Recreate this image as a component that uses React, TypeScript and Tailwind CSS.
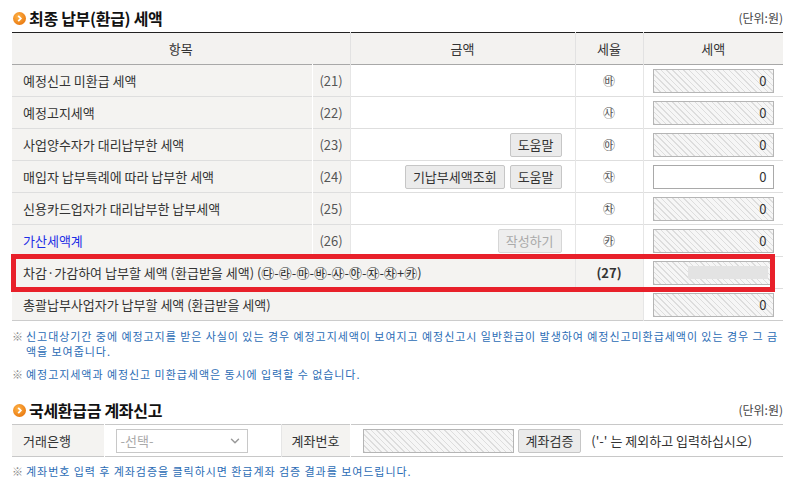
import React from "react";
import { ChevronDown } from "lucide-react";

const Bullet = () => (
  <svg width="13" height="13" viewBox="0 0 13 13" className="shrink-0">
    <defs>
      <radialGradient id="bg" cx="40%" cy="35%" r="70%">
        <stop offset="0%" stopColor="#ffb347" />
        <stop offset="100%" stopColor="#e8770e" />
      </radialGradient>
    </defs>
    <circle cx="6.5" cy="6.5" r="6.5" fill="url(#bg)" />
    <path d="M5.2 3.8 L7.8 6.5 L5.2 9.2" stroke="#fff" strokeWidth="1.8" fill="none" />
  </svg>
);

const Btn = ({ children, disabled }: { children: React.ReactNode; disabled?: boolean }) => (
  <button
    className={
      disabled
        ? "h-[24px] px-[7px] border border-[#d6d6d6] bg-[#eeeeee] rounded-[2px] text-[#aaaaaa] leading-none"
        : "h-[24px] px-[7px] border border-[#c6c6c6] bg-[#ebebeb] rounded-[2px] text-[#333333] leading-none"
    }
  >
    {children}
  </button>
);

const TaxBox = ({ editable, masked }: { editable?: boolean; masked?: boolean }) => (
  <div
    className={
      editable
        ? "h-[24px] w-[121px] border border-[#a9a9a9] bg-white flex items-center justify-end pr-[6px]"
        : "h-[24px] w-[121px] border border-[#b5b5b5] bg-[image:repeating-linear-gradient(45deg,#dddddd_0px,#dddddd_1px,#f6f6f6_1px,#f6f6f6_4px)] flex items-center justify-end pr-[6px]"
    }
  >
    {masked ? <div className="h-[13px] w-[80px] bg-[#e3e3e3] mr-[-1px]" /> : <span className="text-[#333]">0</span>}
  </div>
);

type Row = { label: string; no: string; rate: string; blue?: boolean; btns?: React.ReactNode; editable?: boolean };

const rows: Row[] = [
  { label: "예정신고 미환급 세액", no: "(21)", rate: "㉳" },
  { label: "예정고지세액", no: "(22)", rate: "㉴" },
  { label: "사업양수자가 대리납부한 세액", no: "(23)", rate: "㉵", btns: <Btn>도움말</Btn> },
  {
    label: "매입자 납부특례에 따라 납부한 세액",
    no: "(24)",
    rate: "㉶",
    editable: true,
    btns: (
      <>
        <Btn>기납부세액조회</Btn>
        <Btn>도움말</Btn>
      </>
    ),
  },
  { label: "신용카드업자가 대리납부한 납부세액", no: "(25)", rate: "㉷" },
  { label: "가산세액계", no: "(26)", rate: "㉸", blue: true, btns: <Btn disabled>작성하기</Btn> },
];

const Title = ({ text }: { text: string }) => (
  <div className="h-[32px] pt-[4px] flex items-center justify-between">
    <div className="flex items-center gap-[3px] pl-[1px]">
      <Bullet />
      <h2 className="text-[16px] font-bold text-[#111] tracking-[-0.3px]">{text}</h2>
    </div>
    <span className="text-[12px] text-[#444]">(단위:원)</span>
  </div>
);

export default function App() {
  return (
    <div className="w-[790px] h-[486px] bg-white font-['Noto_Sans_CJK_KR','Noto_Sans',sans-serif] text-[13px] text-[#333] overflow-hidden">
      <div className="ml-[12px] w-[771px]">
        <Title text="최종 납부(환급) 세액" />

        <div className="relative">
          <table className="w-full table-fixed border-collapse border-t border-t-[#222]">
            <colgroup>
              <col className="w-[300px]" />
              <col className="w-[38px]" />
              <col className="w-[225px]" />
              <col className="w-[68px]" />
              <col className="w-[140px]" />
            </colgroup>
            <thead>
              <tr className="h-[32px] bg-[#f3f2f0] border-b border-b-[#a8a8a8]">
                <th colSpan={2} className="font-normal border-r border-r-[#e2e2e2]">항목</th>
                <th className="font-normal border-r border-r-[#e2e2e2]">금액</th>
                <th className="font-normal border-r border-r-[#e2e2e2]">세율</th>
                <th className="font-normal">세액</th>
              </tr>
            </thead>
            <tbody>
              {rows.map((r) => (
                <tr key={r.no} className="h-[32px] border-b border-b-[#dedede]">
                  <td className={r.blue ? "bg-[#f4f3f1] pl-[11px] text-[#1d2ee6] border-r border-r-white" : "bg-[#f4f3f1] pl-[11px] border-r border-r-white"}>
                    {r.label}
                  </td>
                  <td className="bg-[#f4f3f1] text-center text-[#555] border-r border-r-[#e6e6e6]">{r.no}</td>
                  <td className="pr-[13px] border-r border-r-[#e6e6e6]">
                    <div className="flex justify-end gap-[5px]">{r.btns}</div>
                  </td>
                  <td className="text-center text-[12px] text-[#555] border-r border-r-[#e6e6e6]">{r.rate}</td>
                  <td className="pl-[9px]">
                    <TaxBox editable={r.editable} />
                  </td>
                </tr>
              ))}
              <tr className="h-[32px] bg-[#f4f3f1] border-b border-b-[#dedede]">
                <td colSpan={3} className="pl-[11px] border-r border-r-[#e6e6e6]">
                  차감·가감하여 납부할 세액 (환급받을 세액) (㉰-㉱-㉲-㉳-㉴-㉵-㉶-㉷+㉸)
                </td>
                <td className="text-center font-bold text-[#333] border-r border-r-[#e6e6e6]">(27)</td>
                <td className="pl-[9px] bg-white">
                  <TaxBox masked />
                </td>
              </tr>
              <tr className="h-[32px] border-b border-b-[#cccccc]">
                <td colSpan={4} className="bg-[#f4f3f1] pl-[11px] border-r border-r-[#e6e6e6]">
                  총괄납부사업자가 납부할 세액 (환급받을 세액)
                </td>
                <td className="pl-[9px]">
                  <TaxBox />
                </td>
              </tr>
            </tbody>
          </table>
          <div className="absolute left-[-1px] top-[222px] w-[764px] h-[38px] border-[5px] border-[#e8202a] pointer-events-none" />
        </div>

        <div className="mt-[8px] text-[11px] tracking-[0.95px] leading-[15px]">
          <p className="flex">
            <span className="text-[#888] w-[14px] shrink-0 tracking-normal">※</span>
            <span className="text-[#2b6cb5]">
              신고대상기간 중에 예정고지를 받은 사실이 있는 경우 예정고지세액이 보여지고 예정신고시 일반환급이 발생하여 예정신고미환급세액이 있는 경우 그 금액을 보여줍니다.
            </span>
          </p>
          <p className="flex mt-[8px]">
            <span className="text-[#888] w-[14px] shrink-0 tracking-normal">※</span>
            <span className="text-[#2b6cb5]">예정고지세액과 예정신고 미환급세액은 동시에 입력할 수 없습니다.</span>
          </p>
        </div>

        <div className="mt-[10px]">
          <Title text="국세환급금 계좌신고" />
        </div>
        <table className="w-full table-fixed border-collapse border-t border-t-[#c8c8c8]">
          <colgroup>
            <col className="w-[92px]" />
            <col className="w-[177px]" />
            <col className="w-[69px]" />
            <col />
          </colgroup>
          <tbody>
            <tr className="h-[32px] border-b border-b-[#c8c8c8]">
              <td className="bg-[#f4f3f1] pl-[11px] border-r border-r-white">거래은행</td>
              <td className="pl-[11px] border-r border-r-[#e6e6e6]">
                <div className="h-[24px] w-[132px] border border-[#c8c8c8] bg-white flex items-center justify-between pl-[4px] pr-[5px] text-[#aaa]">
                  <span>-선택-</span>
                  <ChevronDown size={14} strokeWidth={2.5} color="#9a9a9a" />
                </div>
              </td>
              <td className="bg-[#f4f3f1] text-center border-r border-r-white">계좌번호</td>
              <td className="pl-[12px]">
                <div className="flex items-center">
                  <div className="h-[24px] w-[151px] border border-[#b5b5b5] bg-[image:repeating-linear-gradient(45deg,#dddddd_0px,#dddddd_1px,#f6f6f6_1px,#f6f6f6_4px)]" />
                  <div className="ml-[4px]">
                    <Btn>계좌검증</Btn>
                  </div>
                  <span className="ml-[10px] text-[#333]">('-' 는 제외하고 입력하십시오)</span>
                </div>
              </td>
            </tr>
          </tbody>
        </table>
        <p className="mt-[7px] flex text-[11px] tracking-[0.95px] leading-[15px]">
          <span className="text-[#888] w-[14px] shrink-0 tracking-normal">※</span>
          <span className="text-[#2b6cb5]">계좌번호 입력 후 계좌검증을 클릭하시면 환급계좌 검증 결과를 보여드립니다.</span>
        </p>
      </div>
    </div>
  );
}
